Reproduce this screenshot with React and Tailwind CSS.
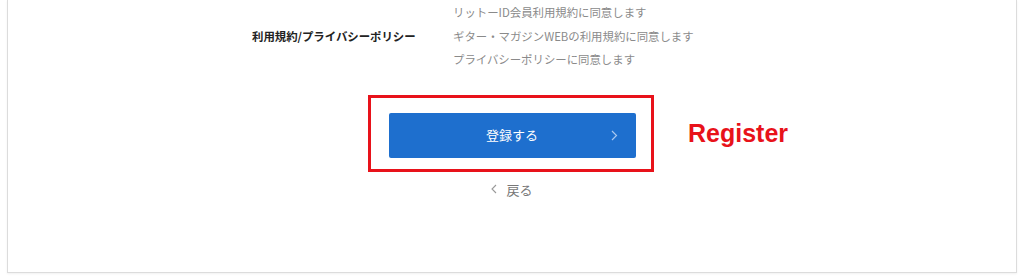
export default function App() {
  const agreements = [
    "リットーID会員利用規約に同意します",
    "ギター・マガジンWEBの利用規約に同意します",
    "プライバシーポリシーに同意します",
  ];

  return (
    <div className="w-[1024px] h-[279px] bg-white overflow-hidden font-['Noto_Sans_CJK_JP',sans-serif]">
      <div className="mx-[7px] h-[273px] border-x border-b border-[#dcdcdc] shadow-[0_1px_2px_rgba(0,0,0,0.06)] bg-white flex flex-col">
        {/* terms row */}
        <div className="flex items-center pl-[244px] pt-[1px]">
          <div className="w-[201px] text-[11.4px] font-bold text-[#222]">
            利用規約/プライバシーポリシー
          </div>
          <div className="flex flex-col">
            {agreements.map((a) => (
              <div key={a} className="text-[11.4px] leading-[23.5px] text-[#8a8a8a]">
                {a}
              </div>
            ))}
          </div>
        </div>

        {/* register button with annotation */}
        <div className="relative flex justify-center mt-[23px]">
          <div className="-ml-[3px] border-[3px] border-[#e8121a] pl-[18px] pr-[15px] pt-[15px] pb-[11px]">
            <button className="w-[247px] h-[45px] bg-[#1e6fce] rounded-[2px] text-white text-[13px] flex items-center relative">
              <span className="flex-1 text-center">登録する</span>
              <svg
                className="absolute right-[18px]"
                width="7"
                height="11"
                viewBox="0 0 7 11"
                fill="none"
                stroke="#a9c8ef"
                strokeWidth="1.2"
              >
                <path d="M1 1 L5.5 5.5 L1 10" />
              </svg>
            </button>
          </div>
          <div className="absolute left-[680px] top-[20px] text-[25px] font-bold text-[#e8121a] font-['Liberation_Sans',sans-serif]">
            Register
          </div>
        </div>

        {/* back link */}
        <div className="flex justify-center items-center gap-[9px] mt-[8px] text-[13px] text-[#777]">
          <svg width="6" height="10" viewBox="0 0 6 10" fill="none" stroke="#999" strokeWidth="1.1">
            <path d="M5 1 L1 5 L5 9" />
          </svg>
          <span>戻る</span>
        </div>
      </div>
    </div>
  );
}
